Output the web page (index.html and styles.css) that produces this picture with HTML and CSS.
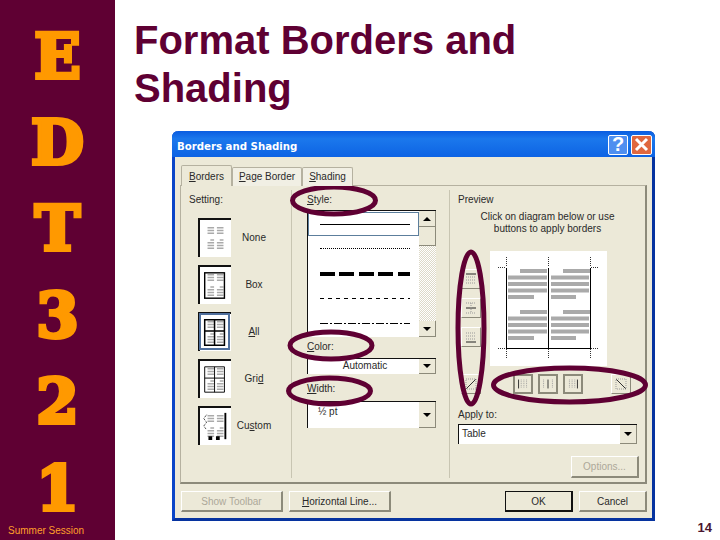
FILE: index.html
```html
<!DOCTYPE html>
<html lang="en">
<head>
<meta charset="utf-8">
<title>Format Borders and Shading</title>
<link rel="stylesheet" href="styles.css">
</head>
<body>
<svg class="defs" width="0" height="0" aria-hidden="true">
  <symbol id="txt" viewBox="0 0 33 39">
    <path d="M8 8h7M18 8h7M8 11h7M18 11h7M8 14h7M18 14h7M11 21h4M21 21h4M8 24h7M18 24h7M8 27h7M18 27h7M8 30h7M18 30h7" stroke="#aaa" stroke-width="1.6" fill="none"/>
  </symbol>
</svg>
<div class="slide">
  <aside class="side">
    <div class="letters">
      <span>E</span><span>D</span><span>T</span><span>3</span><span>2</span><span>1</span>
    </div>
    <div class="session">Summer Session</div>
  </aside>
  <main class="main">
    <h1 class="title">Format Borders and Shading</h1>
    <div class="dialog">
      <div class="titlebar">
        <span class="dtitle">Borders and Shading</span>
        <span class="tb tb-help">?</span>
        <span class="tb tb-close">
          <svg width="15" height="15" viewBox="0 0 15 15"><path d="M2 2l11 11M13 2L2 13" stroke="#fff" stroke-width="3"/></svg>
        </span>
      </div>
      <div class="client">
        <div class="tabs">
          <span class="tab active"><u>B</u>orders</span>
          <span class="tab t2"><u>P</u>age Border</span>
          <span class="tab t3"><u>S</u>hading</span>
        </div>
        <div class="panel">
          <section class="col-setting">
            <div class="lbl">Setting:</div>
            <div class="set-row">
              <svg class="seticon" viewBox="0 0 33 39"><use href="#txt"/></svg><span>None</span>
            </div>
            <div class="set-row">
              <svg class="seticon" viewBox="0 0 33 39"><use href="#txt"/><rect x="5" y="6" width="21" height="27" fill="none" stroke="#000" stroke-width="1.5"/></svg><span>Box</span>
            </div>
            <div class="set-row">
              <svg class="seticon sel" viewBox="0 0 33 39"><use href="#txt"/><path d="M5 6h21v27H5zM15.500 6v27M5 18h21" fill="none" stroke="#000" stroke-width="1.6"/></svg><span><u>A</u>ll</span>
            </div>
            <div class="set-row">
              <svg class="seticon" viewBox="0 0 33 39"><use href="#txt"/><path d="M5 6h21v27H5zM15.500 6v27M5 18h21" fill="none" stroke="#000" stroke-width="1"/></svg><span>Gri<u>d</u></span>
            </div>
            <div class="set-row">
              <svg class="seticon" viewBox="0 0 33 39"><use href="#txt"/><path d="M27 5v28" stroke="#000" stroke-width="2"/><path d="M7 7l-3 4 3 4-3 4 3 4" fill="none" stroke="#000" stroke-dasharray="1 1"/><path d="M9 30h4v4H9zM17 30h4v4h-4z"/></svg><span>Cu<u>s</u>tom</span>
            </div>
          </section>
          <section class="col-style">
            <div class="lbl"><u>S</u>tyle:</div>
            <div class="stylelist">
              <div class="rows">
                <div class="srow chosen"><i class="ln solid"></i></div>
                <div class="srow"><i class="ln dotted"></i></div>
                <div class="srow"><i class="ln thick"></i></div>
                <div class="srow"><i class="ln dashed"></i></div>
                <div class="srow"><i class="ln dashdot"></i></div>
              </div>
              <div class="scroll">
                <span class="sbtn"><b class="up"></b></span>
                <span class="thumb"></span>
                <span class="track"></span>
                <span class="sbtn"><b class="down"></b></span>
              </div>
            </div>
            <div class="lbl l-color"><u>C</u>olor:</div>
            <div class="combo c-auto"><span class="ctext center">Automatic</span><span class="drop"><b class="down"></b></span></div>
            <div class="lbl l-width"><u>W</u>idth:</div>
            <div class="combo c-width"><span class="ctext wpt">½ pt</span><span class="drop"><b class="down"></b></span></div>
          </section>
          <section class="col-preview">
            <div class="lbl">Preview</div>
            <p class="hint">Click on diagram below or use<br>buttons to apply borders</p>
            <div class="pv-area">
              <div class="pv-btns">
                <span class="pbtn"><svg viewBox="0 0 18 18"><path d="M4 4h10" stroke="#222"/><path d="M4 7h10M4 10h10M4 13h10" stroke="#999" stroke-dasharray="1 1"/></svg></span>
                <span class="pbtn"><svg viewBox="0 0 18 18"><path d="M4 9h10" stroke="#222"/><path d="M4 4h10M4 14h10M9 4v10" stroke="#999" stroke-dasharray="1 1"/></svg></span>
                <span class="pbtn"><svg viewBox="0 0 18 18"><path d="M4 14h10" stroke="#222"/><path d="M4 5h10M4 8h10M4 11h10" stroke="#999" stroke-dasharray="1 1"/></svg></span>
              </div>
              <svg class="preview" viewBox="0 0 117 115">
                <g fill="#aaa">
                  <path d="M30 18h27v4H30zM73 18h27v4H73zM30 59h27v4H30zM73 59h27v4H73z"/>
                  <path d="M18 24.500h39v4H18zM61 24.500h38v4H61zM18 31h39v4H18zM61 31h38v4H61zM18 37.500h39v4H18zM61 37.500h38v4H61zM18 44h26v4H18zM61 44h25v4H61z"/>
                  <path d="M18 65.500h39v4H18zM61 65.500h38v4H61zM18 72h39v4H18zM61 72h38v4H61zM18 78.500h39v4H18zM61 78.500h38v4H61zM18 85h26v4H18zM61 85h25v4H61z"/>
                </g>
                <path d="M16.500 17v80M58.500 17v80M100.500 17v80M16 97.500h85" stroke="#000" fill="none"/>
                <path d="M16.500 6v10M58.500 6v10M100.500 6v10M8 16.500h8M101 16.500h8M16.500 98v9M58.500 98v9M100.500 98v9M8 97.500h8M101 97.500h8" stroke="#333" stroke-dasharray="1 1" fill="none"/>
              </svg>
            </div>
            <div class="pv-row">
              <span class="pbtn"><svg viewBox="0 0 18 18"><path d="M4 14L14 4" stroke="#333"/><path d="M4 4h10v10H4z" fill="none" stroke="#999" stroke-dasharray="1 1"/></svg></span>
              <span class="pbtn b-l"><svg viewBox="0 0 18 18"><path d="M4 4v10" stroke="#222"/><path d="M7 4v10M10 4v10M13 4v10" stroke="#999" stroke-dasharray="1 1"/></svg></span>
              <span class="pbtn"><svg viewBox="0 0 18 18"><path d="M9 4v10" stroke="#222"/><path d="M4 4v10M14 4v10" stroke="#999" stroke-dasharray="1 1"/></svg></span>
              <span class="pbtn"><svg viewBox="0 0 18 18"><path d="M14 4v10" stroke="#222"/><path d="M5 4v10M8 4v10M11 4v10" stroke="#999" stroke-dasharray="1 1"/></svg></span>
              <span class="pbtn b-d"><svg viewBox="0 0 18 18"><path d="M4 4l10 10" stroke="#333"/><path d="M4 4h10v10H4z" fill="none" stroke="#999" stroke-dasharray="1 1"/></svg></span>
            </div>
            <div class="lbl l-apply">Apply to:</div>
            <div class="combo c-apply"><span class="ctext">Table</span><span class="drop"><b class="down"></b></span></div>
            <div class="opt-row"><span class="btn disabled b-opt">Options...</span></div>
          </section>
        </div>
        <div class="actions">
          <span class="btn disabled b-show">Show Toolbar</span>
          <span class="btn b-horiz"><u>H</u>orizontal Line...</span>
          <span class="btn b-ok">OK</span>
          <span class="btn b-cancel">Cancel</span>
        </div>
      </div>
      <svg class="marks" viewBox="0 0 483 390" aria-hidden="true">
        <g fill="none" stroke="#5f0033" stroke-width="5">
          <ellipse cx="162" cy="69.500" rx="41.500" ry="13.500"/>
          <ellipse cx="159" cy="214.500" rx="41" ry="13.500"/>
          <ellipse cx="157.500" cy="260" rx="41" ry="13"/>
          <ellipse cx="299" cy="197" rx="13" ry="76"/>
          <ellipse cx="397.500" cy="254" rx="76" ry="17"/>
        </g>
      </svg>
    </div>
    <div class="pageno">14</div>
  </main>
</div>
</body>
</html>
```
FILE: styles.css
```css
* { box-sizing: border-box; }
html, body { margin: 0; padding: 0; background: #fff; }
body { width: 720px; height: 540px; overflow: hidden; font-family: "Liberation Sans", Arial, sans-serif; }
.defs { position: absolute; }
.slide { display: flex; width: 720px; height: 540px; }

.side { width: 115px; height: 540px; background: #5f0033; display: flex; flex-direction: column; align-items: center; }
.letters { display: flex; flex-direction: column; align-items: center; gap: 14.400px; padding-top: 20.700px; font-family: "DejaVu Serif", serif; font-weight: 700; font-size: 61px; color: #ff9900; -webkit-text-stroke: 4px #ff9900; }
.letters span { display: block; height: 72px; line-height: 72px; }
.session { align-self: flex-start; margin: 0 0 0 8px; font-size: 10px; line-height: 12px; color: #ff9f2a; white-space: nowrap; }

.main { flex: 1; display: flex; flex-direction: column; padding: 16px 0 0 19px; }
.title { margin: 0; width: 400px; font-size: 40px; line-height: 48px; font-weight: 700; color: #5f0033; }
.dialog { position: relative; width: 483px; height: 390px; margin: 19px 0 0 38px; border: 3px solid #0a45c8; border-top: 0; border-radius: 6px 6px 0 0; display: flex; flex-direction: column; background: #ece9d8; border-right-color: #06339f; border-bottom-color: #06339f; }
.titlebar { height: 26px; margin: 0 -3px; padding: 1px 3px 0 5px; display: flex; align-items: center; gap: 3px; background: linear-gradient(#0a5ce0, #1b78ec 30%, #0d63e4); border-radius: 6px 6px 0 0; }
.dtitle { flex: 1; padding-top: 4px; font-family: "DejaVu Sans", sans-serif; font-weight: 700; font-size: 10.200px; color: #fff; white-space: nowrap; }
.tb { width: 20px; height: 20px; display: flex; align-items: center; justify-content: center; border: 1px solid #fff; border-radius: 2px; }
.tb-help { background: #4f8ff0; color: #fff; font-weight: 700; font-size: 20px; }
.tb-close { background: #e0683f; width: 21px; }

.client { flex: 1; display: flex; flex-direction: column; padding: 8px 5px 0 5px; font-size: 10px; color: #2a2a2a; }
.tabs { display: flex; height: 21px; padding-left: 1px; align-items: flex-end; position: relative; z-index: 1; }
.tab { height: 19px; padding-top: 3px; text-align: center; background: #f1efe4; border: 1px solid #b5b1a0; border-bottom: 0; border-radius: 2px 2px 0 0; }
.tab.active { width: 51px; height: 21px; padding-top: 5px; background: #ece9d8; }
.t2 { width: 70px; }
.t3 { width: 51px; }
.panel { width: 467px; height: 299px; margin-top: -1px; display: grid; grid-template-columns: 110px 158px 199px; border: 1px solid #b5b1a0; border-right: 2px solid #8c8a7a; border-bottom: 2px solid #8c8a7a; }
.lbl { height: 12px; line-height: 12px; }

.col-setting { padding: 8px 0 0 17px; }
.col-setting .lbl { margin: 0 0 12px -9px; }
.set-row { display: flex; align-items: center; height: 39px; margin-bottom: 8px; }
.set-row span { flex: 0 0 42px; margin-left: 2px; text-align: center; }
.seticon { width: 33px; height: 39px; background: #fff; border-left: 2px solid #111; border-top: 2px solid #111; }
.seticon.sel { outline: 2px solid #4f6f9c; outline-offset: -3px; }

.col-style { margin: 4px 0; padding: 4px 0 0 15px; border-left: 1px solid #c8c5b2; }
.stylelist { display: flex; width: 129px; height: 127px; margin-top: 4px; background: #fff; border-left: 1.500px solid #111; border-top: 1.500px solid #111; }
.rows { flex: 1; padding-top: 1px; }
.srow { height: 25px; padding: 0 8px 0 12px; display: flex; align-items: center; }
.srow.chosen { height: 24px; border: 1px solid #5c7e9c; padding-left: 11px; }
.ln { display: block; width: 90px; }
.solid { border-top: 1.500px solid #000; }
.dotted { border-top: 1px dotted #000; }
.thick { height: 4px; background: repeating-linear-gradient(90deg, #000 0 15px, #fff 15px 19.500px); }
.dashed { height: 1px; background: repeating-linear-gradient(90deg, #000 0 4px, #fff 4px 8px); }
.dashdot { height: 1px; background: repeating-linear-gradient(90deg, #000 0 8px, #fff 8px 10px, #000 10px 12px, #fff 12px 14px); }
.scroll { width: 17px; display: flex; flex-direction: column; background: #ece9d8; }
.track { flex: 1; background: repeating-conic-gradient(#fff 0 25%, #ddd9c8 0 50%) 0 0 / 2px 2px; }
.sbtn, .drop { display: flex; align-items: center; justify-content: center; background: #ece9d8; border-right: 1px solid #8c8a7a; border-bottom: 1px solid #8c8a7a; }
.sbtn { height: 16px; }
.thumb { height: 19px; background: #ece9d8; border-right: 1px solid #8c8a7a; border-bottom: 1px solid #8c8a7a; }
.up { border: 4px solid transparent; border-top: 0; border-bottom: 4px solid #000; }
.down { border: 4px solid transparent; border-bottom: 0; border-top: 4px solid #000; }

.l-color { margin-top: 4px; }
.combo { display: flex; background: #fff; border-left: 1.500px solid #111; border-top: 1.500px solid #111; }
.ctext { flex: 1; padding-left: 3px; }
.center { text-align: center; line-height: 14px; }
.wpt { padding-left: 10px; line-height: 20px; }
.drop { width: 17px; }
.c-auto { width: 129px; height: 16px; margin-top: 5px; }
.l-width { margin-top: 9px; }
.c-width { width: 129px; height: 27px; margin-top: 6px; }

.col-preview { margin: 4px 0; padding: 4px 0 0 8px; border-left: 1px solid #c8c5b2; }
.hint { margin: 5px 0 0; width: 179px; text-align: center; line-height: 12px; }
.pv-area { display: flex; margin: 16px 0 0 3px; height: 115px; }
.pv-btns { display: flex; flex-direction: column; gap: 9px; padding-top: 18px; width: 29px; }
.pbtn { display: block; width: 20px; height: 20px; background: #ece9d8; border: 1px solid #fff; border-right: 1.500px solid #8c8a7a; border-bottom: 1.500px solid #8c8a7a; }
.pbtn svg { display: block; width: 100%; height: 100%; }
.preview { width: 117px; height: 115px; background: #fff; }
.pv-row { display: flex; gap: 5px; margin: 8px 0 0 3px; }
.b-l { margin-left: 27px; }
.b-d { margin-left: 23px; }
.pv-row .pbtn:nth-child(n+2):not(.b-d) { border: 2px solid #8c8a7a; }
.l-apply { margin-top: 15px; }
.c-apply { width: 179px; height: 20px; margin-top: 3px; line-height: 18px; }
.opt-row { display: flex; width: 181px; justify-content: flex-end; margin-top: 12px; }

.btn { display: flex; align-items: center; justify-content: center; height: 21px; background: #ece9d8; border: 1px solid #fff; border-right: 2px solid #8c8a7a; border-bottom: 2px solid #8c8a7a; white-space: nowrap; }
.disabled { color: #aca899; }
.b-opt { width: 68px; height: 22px; }
.actions { display: flex; margin-top: 7px; padding-left: 1px; }
.b-show { width: 102px; }
.b-horiz { width: 102px; margin-left: 6px; }
.b-ok { width: 68px; margin-left: 114px; border: 1px solid #111; border-right-width: 2px; border-bottom-width: 2px; }
.b-cancel { width: 68px; margin-left: 6px; }

.marks { position: absolute; left: -3px; top: 0; width: 483px; height: 390px; pointer-events: none; }
.pageno { align-self: flex-end; margin: -1px 8px 0 0; font-size: 13px; line-height: 15px; font-weight: 700; color: #4a1530; }
```
